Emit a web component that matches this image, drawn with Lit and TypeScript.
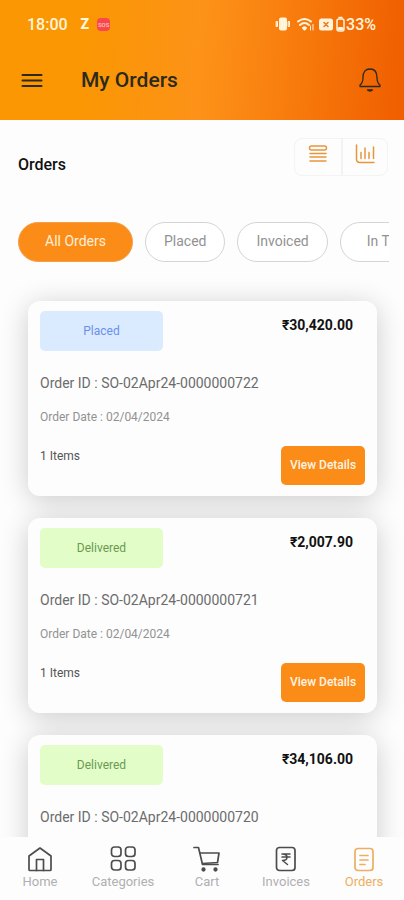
import { LitElement, html, css, svg } from "lit";
import { customElement, property, state } from "lit/decorators.js";
import { classMap } from "lit/directives/class-map.js";

interface Order {
  id: string;
  status: "Placed" | "Delivered";
  amount: string;
  date: string;
  items: number;
}

const ORDERS: Order[] = [
  { id: "SO-02Apr24-0000000722", status: "Placed", amount: "₹30,420.00", date: "02/04/2024", items: 1 },
  { id: "SO-02Apr24-0000000721", status: "Delivered", amount: "₹2,007.90", date: "02/04/2024", items: 1 },
  { id: "SO-02Apr24-0000000720", status: "Delivered", amount: "₹34,106.00", date: "02/04/2024", items: 1 },
];

const FILTERS = ["All Orders", "Placed", "Invoiced", "In Transit"];

const NAV = [
  {
    label: "Home",
    icon: svg`<path d="M3 11 14 3l11 8v13.500a1 1 0 0 1-1 1H4a1 1 0 0 1-1-1z"/><path d="M10.500 25.500V14.500h7v11"/>`,
  },
  {
    label: "Categories",
    icon: svg`<rect x="2.500" y="2" width="9.500" height="9.500" rx="3"/><rect x="16.500" y="2" width="9.500" height="9.500" rx="3"/><rect x="2.500" y="15.500" width="9.500" height="9.500" rx="3"/><rect x="16.500" y="15.500" width="9.500" height="9.500" rx="3"/>`,
  },
  {
    label: "Cart",
    icon: svg`<path d="M1 2.500h4.500L9.500 19.500h15.500"/><path d="M7 8h19l-1.500 9.500L9.500 18.500"/><circle cx="10.500" cy="24.500" r="1.300" fill="currentColor"/><circle cx="22.500" cy="24.500" r="1.300" fill="currentColor"/>`,
  },
  {
    label: "Invoices",
    icon: svg`<rect x="4.500" y="2.500" width="18.500" height="23" rx="3"/><path d="M10 9h8M10 12h8M10.500 9c6 0 6 6.500 0 6.500l5 4" stroke-width="1.500"/>`,
  },
  {
    label: "Orders",
    icon: svg`<rect x="5" y="3.500" width="18" height="22" rx="3"/><path d="M10 10.500h8M10 15h8M10 19.500h5"/>`,
  },
];

@customElement("order-card")
export class OrderCard extends LitElement {
  @property({ attribute: false }) order!: Order;

  static styles = css`
    :host {
      display: block;
      flex: none;
      border-radius: 12px;
      background: #fdfdfd;
      box-shadow: 0 4px 28px rgba(0, 0, 0, 0.2);
    }
    .card {
      display: flex;
      flex-direction: column;
      padding: 10px 12px 11px;
    }
    .top,
    .bottom {
      display: flex;
      justify-content: space-between;
    }
    .status {
      width: 123px;
      border-radius: 5px;
      font-size: 12px;
      line-height: 40px;
      text-align: center;
      background: #dbebff;
      color: #6b8fec;
    }
    .status.delivered {
      background: #e3fdc9;
      color: #6a9a50;
    }
    .amount {
      margin-right: 12px;
      font-size: 14px;
      font-weight: 700;
      line-height: 28px;
      color: #111;
    }
    p {
      margin: 0;
    }
    .id {
      margin-top: 22px;
      font-size: 14px;
      line-height: 20px;
      color: #6c6c6c;
    }
    .date {
      margin-top: 14px;
      font-size: 12px;
      line-height: 20px;
      color: #929292;
    }
    .items {
      font-size: 12px;
      line-height: 20px;
      color: #555;
    }
    .bottom {
      margin-top: 19px;
    }
    button {
      width: 84px;
      height: 39px;
      padding: 0 0 2px;
      border: 0;
      border-radius: 5px;
      background: #fb8c17;
      color: #fff4e4;
      font: 500 12px Roboto, sans-serif;
    }
  `;

  render() {
    const o = this.order;
    return html`<article class="card">
      <div class="top">
        <span class=${classMap({ status: true, delivered: o.status === "Delivered" })}>${o.status}</span>
        <span class="amount">${o.amount}</span>
      </div>
      <p class="id">Order ID : ${o.id}</p>
      <p class="date">Order Date : ${o.date}</p>
      <div class="bottom">
        <span class="items">${o.items} Items</span>
        <button type="button">View Details</button>
      </div>
    </article>`;
  }
}

@customElement("app-root")
export class AppRoot extends LitElement {
  @state() private filter = "All Orders";

  static styles = css`
    :host {
      display: flex;
      flex-direction: column;
      height: 100vh;
      overflow: hidden;
      background: #fdfdfd;
      font-family: Roboto, "Noto Sans", sans-serif;
    }
    svg {
      display: block;
      fill: none;
      stroke: currentColor;
      stroke-linecap: round;
      stroke-linejoin: round;
    }
    button {
      padding: 0;
      border: 0;
      background: none;
      color: inherit;
      font: inherit;
    }
    h1,
    h2 {
      margin: 0;
    }
    .header {
      flex: none;
      background: linear-gradient(94deg, #fa9702 20%, #fd9218 50%, #f9800f 68%, #f06000 98%);
    }
    .statusbar {
      display: flex;
      align-items: center;
      height: 48px;
      padding: 0 28px 0 27px;
      color: #fff4dc;
      font-size: 16px;
      font-weight: 500;
    }
    .zed {
      margin-left: 13px;
      font-size: 14px;
      font-weight: 900;
    }
    .sos {
      margin-left: 8px;
      width: 13px;
      border-radius: 4px;
      background: #f8484e;
      color: #ffc4bc;
      font-size: 6px;
      line-height: 13px;
      text-align: center;
    }
    .signals {
      display: flex;
      align-items: center;
      margin-left: auto;
    }
    .toolbar {
      display: flex;
      align-items: center;
      height: 64px;
      padding: 0 22px 8px 20px;
      color: #2b2a1c;
    }
    .toolbar h1 {
      flex: 1;
      margin-left: 37px;
      font-size: 21px;
      font-weight: 500;
    }
    .heading {
      display: flex;
      flex: none;
      align-items: center;
      justify-content: space-between;
      padding: 18px 16px 0 18px;
    }
    .heading h2 {
      padding-top: 14px;
      font-size: 16px;
      font-weight: 500;
      color: #111;
    }
    .views {
      display: flex;
      border: 1px solid #f3f3f3;
      border-radius: 8px;
      color: #e8963a;
    }
    .views button {
      display: flex;
      justify-content: center;
      width: 46px;
      height: 36px;
      padding-top: 5px;
      box-sizing: border-box;
    }
    .views button + button {
      border-left: 2px solid #f3f3f3;
    }
    .chips {
      display: flex;
      flex: none;
      gap: 12px;
      margin: 46px 15px 0 18px;
      overflow: hidden;
    }
    .chip {
      flex: none;
      box-sizing: border-box;
      height: 40px;
      padding: 0 18px 2px;
      border: 1px solid #d4d4d4;
      border-radius: 20px;
      background: #fff;
      font-size: 14px;
      color: #929292;
    }
    .chip.wide {
      padding: 0 26px 2px;
    }
    .chip.active {
      border-color: #f3a04a;
      background: #fb8c17;
      color: #fff0da;
    }
    .list {
      display: flex;
      flex: 1;
      flex-direction: column;
      gap: 22px;
      min-height: 0;
      padding: 39px 27px 0 28px;
      overflow: hidden;
    }
    .nav {
      display: grid;
      flex: none;
      grid-template-columns: 80fr 86fr 82fr 76fr 80fr;
      height: 63px;
      background: #fdfdfd;
    }
    .nav a {
      display: flex;
      flex-direction: column;
      align-items: center;
      padding-top: 8px;
      color: #4c4c4c;
      font-size: 13px;
      line-height: 18px;
      text-decoration: none;
    }
    .nav span {
      color: #b0b0b0;
    }
    .nav .current,
    .nav .current span {
      color: #edae60;
    }
  `;

  render() {
    return html`
      <header class="header">
        <div class="statusbar">
          <span>18:00</span>
          <span class="zed">Z</span>
          <span class="sos">SOS</span>
          <div class="signals">
            <svg width="71" height="16" viewBox="0 0 71 16" aria-hidden="true">
              <g fill="currentColor" stroke="none">
                <rect x="4" y="1.500" width="8" height="13" rx="2" />
                <path d="M1.500 5.500h1v5h-1zM13.500 5.500h1v5h-1z" stroke="currentColor" />
              </g>
              <g stroke-width="2">
                <path d="M23 5.500q6.500-5 13 0M25 9q4.500-4 9 0M28 12q1.500-1.500 3 0l-1.500 1.500z" />
                <path d="M35.500 10v4M38 8.500v5.500" stroke-width="1" />
              </g>
              <rect x="44" y="2.500" width="14" height="12" rx="2.500" fill="currentColor" stroke="none" />
              <path d="m49 6.500 4 4m0-4-4 4" stroke="#f5760c" stroke-width="1.500" />
              <rect x="62" y="3" width="7" height="12" rx="2" stroke-width="1.500" />
              <path d="M64 1.500h3" stroke-width="1.500" />
              <path d="M64 12.500h3" stroke-width="3" />
            </svg>
            <span>33%</span>
          </div>
        </div>
        <div class="toolbar">
          <button type="button" aria-label="Menu">
            <svg width="24" height="24" viewBox="0 0 24 24" stroke-width="2">
              <path d="M2.500 7h19M2.500 12.500h19M2.500 18h19" />
            </svg>
          </button>
          <h1>My Orders</h1>
          <button type="button" aria-label="Notifications">
            <svg width="24" height="28" viewBox="0 0 24 28" stroke-width="1.300">
              <path d="M2 20.500v-1.500q3-2 3-7.500 0-8.500 7-8.500t7 8.500q0 5.500 3 7.500v1.500z" />
              <path d="M9.500 24q2.500 2 5 0z" />
            </svg>
          </button>
        </div>
      </header>

      <div class="heading">
        <h2>Orders</h2>
        <div class="views">
          <button type="button" aria-label="List view">
            <svg width="20" height="20" viewBox="0 0 20 20" stroke-width="1.500">
              <rect x="1.500" y="2" width="17" height="4" rx="2" />
              <path d="M2 9.500h16M2 13h16M2 17h16" />
            </svg>
          </button>
          <button type="button" aria-label="Chart view">
            <svg width="20" height="20" viewBox="0 0 20 20" stroke-width="1.500">
              <path d="M1.500 1v14q0 3.500 3.500 3.500h14M6 8.500v6M10 4v10.500M14 8.500v6M18.500 3v11.500" />
            </svg>
          </button>
        </div>
      </div>

      <div class="chips">
        ${FILTERS.map(
          (f) => html`<button
            type="button"
            class=${classMap({ chip: true, wide: f.includes(" "), active: f === this.filter })}
            @click=${() => (this.filter = f)}
          >${f}</button>`
        )}
      </div>

      <main class="list">${ORDERS.map((o) => html`<order-card .order=${o}></order-card>`)}</main>

      <nav class="nav">
        ${NAV.map(
          (n) => html`<a href="#" class=${classMap({ current: n.label === "Orders" })}>
            <svg width="28" height="28" viewBox="0 0 28 28" stroke-width="1.700" aria-hidden="true">${n.icon}</svg>
            <span>${n.label}</span>
          </a>`
        )}
      </nav>
    `;
  }
}
